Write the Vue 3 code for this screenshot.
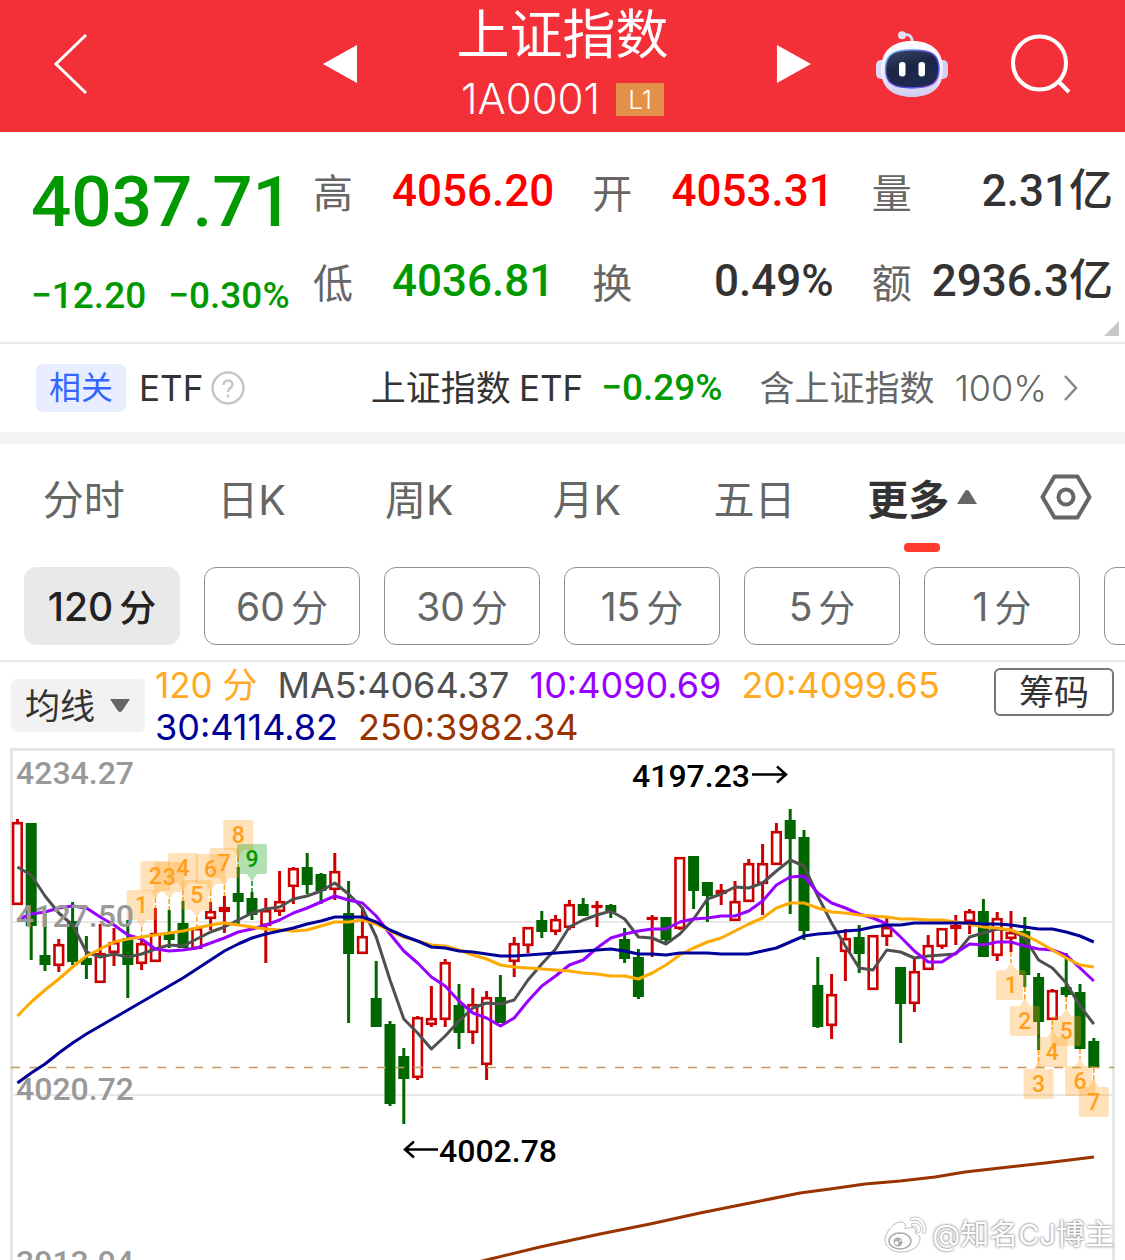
<template>
  <div class="page">
    <header class="topbar">
      <button class="icon-btn back" aria-label="返回">
        <svg width="36" height="62" viewBox="0 0 36 62"><path d="M33 2 L3 31 L33 60" fill="none" stroke="#fff" stroke-width="3" /></svg>
      </button>
      <div class="switcher">
        <button class="icon-btn arrow" aria-label="上一个">
          <svg width="34" height="38" viewBox="0 0 34 38"><path d="M34 0 V38 L0 19 Z" fill="#fff" /></svg>
        </button>
        <div class="title">
          <h1>上证指数</h1>
          <div class="code">1A0001 <span class="level">L1</span></div>
        </div>
        <button class="icon-btn arrow" aria-label="下一个">
          <svg width="34" height="38" viewBox="0 0 34 38"><path d="M0 0 V38 L34 19 Z" fill="#fff" /></svg>
        </button>
      </div>
      <div class="actions">
        <button class="icon-btn" aria-label="智能助手">
          <svg width="72" height="66" viewBox="0 0 72 66">
            <defs>
              <linearGradient id="shell" x1="0" y1="0" x2="0" y2="1">
                <stop offset="0" stop-color="#ffffff" />
                <stop offset="0.6" stop-color="#eceafa" />
                <stop offset="1" stop-color="#cfcbf0" />
              </linearGradient>
              <linearGradient id="rim" x1="0" y1="0" x2="1" y2="1">
                <stop offset="0" stop-color="#59d8ee" />
                <stop offset="0.45" stop-color="#6c3fe8" />
                <stop offset="0.7" stop-color="#4a59f0" />
                <stop offset="1" stop-color="#b44cf5" />
              </linearGradient>
              <linearGradient id="visor" x1="0" y1="0" x2="0.4" y2="1">
                <stop offset="0" stop-color="#404a6c" />
                <stop offset="0.5" stop-color="#1b2545" />
                <stop offset="1" stop-color="#1e2a50" />
              </linearGradient>
            </defs>
            <path d="M26 4 C33 2 36 5 36.500 12" fill="none" stroke="#dcdaf3" stroke-width="3" />
            <circle cx="26" cy="4.200" r="4" fill="#e4e2f7" />
            <rect x="0" y="29" width="12" height="19" rx="5" fill="#dedbf5" />
            <rect x="60" y="29" width="12" height="19" rx="5" fill="#d3d0f1" />
            <path d="M36 10 C56 10 67 20 67 39 C67 57 55 66 36 66 C17 66 5 57 5 39 C5 20 16 10 36 10 Z" fill="url(#shell)" />
            <path d="M36 19 C55 19 63 23 63 38 C63 52 56 57 36 57 C17 57 9.500 52 9.500 38 C9.500 23 18 19 36 19 Z" fill="url(#visor)" stroke="url(#rim)" stroke-width="1.500" />
            <rect x="23" y="31" width="6.500" height="14.500" rx="3" fill="#fff" />
            <rect x="42.500" y="31" width="6.500" height="14.500" rx="3" fill="#fff" />
          </svg>
        </button>
        <button class="icon-btn" aria-label="搜索">
          <svg width="62" height="62" viewBox="0 0 62 62" fill="none" stroke="#fff" stroke-width="4">
            <circle cx="29.500" cy="30" r="26.500" />
            <path d="M48 48 L59 59" />
          </svg>
        </button>
      </div>
    </header>

    <section class="quote">
      <div class="price">
        <div class="last">4037.71</div>
        <div class="change"><span>−12.20</span><span>−0.30%</span></div>
      </div>
      <dl class="stats">
        <div v-for="s in stats" :key="s.label" class="stat">
          <dt>{{ s.label }}</dt>
          <dd :class="s.tone">{{ s.value }}</dd>
        </div>
      </dl>
      <svg class="corner" width="15" height="15" viewBox="0 0 15 15"><path d="M15 0 V15 H0 Z" fill="#c8c8c8" /></svg>
    </section>

    <a class="related" href="#etf">
      <span class="tag">相关</span>
      <span class="etf">ETF</span>
      <svg class="help" width="34" height="34" viewBox="0 0 34 34" fill="none" stroke="#c6c6c6" stroke-width="2.500">
        <circle cx="17" cy="17" r="15.500" />
        <path d="M12.500 14 C12.500 8 21.500 8 21.500 13.500 C21.500 17 17 17 17 21" />
        <path d="M17 23.500 V26.500" />
      </svg>
      <span class="name">上证指数<span class="latin">ETF</span></span>
      <span class="pct">−0.29%</span>
      <span class="contain">含上证指数</span>
      <span class="weight">100%</span>
      <svg class="chevron" width="16" height="28" viewBox="0 0 16 28"><path d="M2 2 L13 14 L2 26" fill="none" stroke="#888" stroke-width="2.500" /></svg>
    </a>

    <nav class="tabs">
      <button v-for="t in tabs" :key="t" :class="['tab', { active: t === activeTab }]" @click="activeTab = t">
        {{ t }}
        <svg v-if="t === '更多'" width="20" height="14" viewBox="0 0 20 14"><path d="M8 1 Q10 -1 12 1 L20 14 H0 Z" fill="#666" /></svg>
      </button>
      <button class="tab" aria-label="设置">
        <svg width="52" height="46" viewBox="0 0 52 46" fill="none" stroke="#666" stroke-width="4">
          <path d="M14.500 2.500 H37.500 L49.500 23 L37.500 43.500 H14.500 L2.500 23 Z" stroke-linejoin="round" />
          <circle cx="26" cy="23" r="7.500" />
        </svg>
      </button>
    </nav>

    <div class="periods">
      <button v-for="p in periods" :key="p" :class="['period', { active: p === activePeriod }]" @click="activePeriod = p">
        <template v-if="p"><span>{{ p }}</span><span class="unit">分</span></template>
      </button>
    </div>

    <div class="indicator">
      <div class="picker">
        <select v-model="overlay" aria-label="主图指标">
          <option>均线</option>
        </select>
        <svg width="20" height="13" viewBox="0 0 20 13"><path d="M0 0 H20 L12 12 Q10 14 8 12 Z" fill="#666" /></svg>
      </div>
      <div class="legend">
        <span v-for="l in legend" :key="l.text" :class="l.cls">{{ l.text }}</span>
      </div>
      <button class="chips">筹码</button>
    </div>

    <div class="chart-wrap">
      <svg class="chart" viewBox="0 748 1125 512">
        <path class="frame" d="M11.500 1270 V749.500 H1113.500 V1270" />
        <path class="grid" d="M12 922 H1113 M12 1095 H1113" />

        <g v-for="(c, i) in candles" :key="'c' + i" :class="c[0] === 'r' ? 'up' : 'down'">
          <template v-if="c[0] === 'r'">
            <path :d="`M${x(i)} ${c[1]} V${c[2] + 1} M${x(i)} ${c[3] - 1} V${c[4]}`" />
            <rect :x="x(i) - 4.3" :y="c[2] + 1.2" width="8.600" :height="Math.max(c[3] - c[2] - 2.4, 0.6)" />
          </template>
          <template v-else>
            <path :d="`M${x(i)} ${c[1]} V${c[4]}`" />
            <rect :x="x(i) - 5.5" :y="c[2]" width="11" :height="c[3] - c[2]" />
          </template>
        </g>

        <path class="last-line" d="M11 1067.500 H1114" />

        <g v-for="m in marks" :key="'m' + m.i + m.n" :class="['mark', { done: m.n === 9 }]">
          <path class="gap" :d="stem(m)" />
          <path class="stem" :d="stem(m)" />
          <path class="tagbox" :d="tagPath(m)" />
          <text :x="x(m.i)" :y="m.y + 23">{{ m.n }}</text>
        </g>

        <polyline v-for="l in lines" :key="l.cls" :class="['ma', l.cls]" :points="points(l.ys)" />
        <polyline class="ma ma250" points="478,1262 540,1247 600,1234 650,1224 700,1213 750,1203 800,1193 830,1189 865,1184 900,1181 935,1177 965,1172 1000,1168 1045,1163 1094,1157" />

        <text class="axis" x="16" y="784">4234.27</text>
        <text class="axis" x="16" y="927">4127.50</text>
        <text class="axis" x="16" y="1100">4020.72</text>
        <text class="axis" x="16" y="1273">3913.94</text>

        <text class="peak" x="632" y="787">4197.23</text>
        <path class="peak-arrow" d="M752 774.500 H786 M777 766.500 L786 774.500 L777 782.500" />
        <text class="peak" x="439" y="1162">4002.78</text>
        <path class="peak-arrow" d="M438 1149.500 H405 M414 1141.500 L405 1149.500 L414 1157.500" />
      </svg>

      <div class="watermark">
        <svg width="44" height="38" viewBox="0 0 44 38">
          <path d="M17 6 C12 5 1 15 1 24 C1 31 8 36 17 36 C28 36 36 30 36 23 C36 19 33 18 31 17 C33 12 29 10 21 13 C22 9 21 6 17 6 Z" fill="#fff" stroke="#bbb" />
          <ellipse cx="16" cy="25" rx="11" ry="8" fill="#fff" stroke="#aaa" stroke-width="1.500" />
          <circle cx="14" cy="26" r="4.500" fill="#aaa" />
          <circle cx="12.500" cy="27" r="2" fill="#fff" />
          <circle cx="16.500" cy="24.500" r="1" fill="#fff" />
          <path d="M28 3 C36 1 42 8 40 16 M29 9 C33 8 36 11 34.500 15" fill="none" stroke="#bbb" stroke-width="4" stroke-linecap="round" />
          <path d="M28 3 C36 1 42 8 40 16 M29 9 C33 8 36 11 34.500 15" fill="none" stroke="#fff" stroke-width="2.500" stroke-linecap="round" />
        </svg>
        <span>@知名CJ博主</span>
      </div>
    </div>
  </div>
</template>

<script setup>
import { ref } from 'vue'

const stats = [
  { label: '高', value: '4056.20', tone: 'rise' },
  { label: '开', value: '4053.31', tone: 'rise' },
  { label: '量', value: '2.31亿', tone: '' },
  { label: '低', value: '4036.81', tone: 'fall' },
  { label: '换', value: '0.49%', tone: '' },
  { label: '额', value: '2936.3亿', tone: '' },
]

const tabs = ['分时', '日K', '周K', '月K', '五日', '更多']
const activeTab = ref('更多')

// last entry is the empty one that runs off the right edge
const periods = ['120', '60', '30', '15', '5', '1', '']
const activePeriod = ref('120')

const overlay = ref('均线')

const legend = [
  { text: '120 分', cls: 'c-period' },
  { text: 'MA5:4064.37', cls: 'c-ma5' },
  { text: '10:4090.69', cls: 'c-ma10' },
  { text: '20:4099.65', cls: 'c-ma20' },
  { text: '30:4114.82', cls: 'c-ma30' },
  { text: '250:3982.34', cls: 'c-ma250' },
]

// [colour, high, body top, body bottom, low]
const candles = [
  ['r', 819, 822, 905, 905], ['g', 823, 823, 926, 960], ['g', 912, 955, 965, 971], ['r', 939, 944, 966, 972],
  ['g', 902, 921, 962, 965], ['g', 936, 958, 965, 979], ['r', 924, 953, 983, 983], ['r', 928, 942, 953, 966],
  ['g', 920, 938, 965, 998], ['r', 938, 943, 964, 970], ['r', 908, 933, 962, 962], ['g', 910, 932, 940, 948],
  ['g', 901, 923, 948, 948], ['r', 928, 928, 949, 949], ['r', 902, 911, 919, 930], ['r', 896, 907, 912, 933],
  ['g', 867, 893, 902, 926], ['g', 892, 898, 915, 920], ['r', 898, 910, 926, 963], ['r', 871, 901, 912, 916],
  ['r', 867, 868, 887, 904], ['g', 853, 867, 885, 894], ['g', 873, 874, 891, 904], ['r', 853, 871, 890, 900],
  ['g', 881, 913, 954, 1023], ['r', 907, 936, 954, 954], ['g', 961, 998, 1027, 1027], ['g', 1021, 1024, 1104, 1106],
  ['g', 1048, 1056, 1079, 1124], ['r', 1016, 1017, 1078, 1080], ['r', 986, 1018, 1025, 1027], ['r', 959, 962, 1020, 1027],
  ['g', 984, 1005, 1033, 1049], ['r', 988, 1004, 1033, 1044], ['r', 991, 997, 1065, 1080], ['g', 975, 997, 1023, 1023],
  ['r', 937, 943, 962, 977], ['r', 927, 927, 946, 953], ['g', 911, 920, 932, 938], ['r', 915, 919, 932, 935],
  ['r', 900, 904, 928, 930], ['g', 898, 904, 916, 916], ['r', 901, 905, 908, 927], ['g', 904, 905, 912, 918],
  ['g', 928, 939, 959, 963], ['g', 949, 957, 997, 999], ['r', 915, 917, 920, 957], ['g', 917, 917, 940, 943],
  ['r', 857, 857, 929, 930], ['g', 856, 856, 891, 909], ['g', 882, 882, 896, 922], ['r', 884, 890, 894, 905],
  ['r', 881, 901, 921, 921], ['r', 859, 863, 902, 902], ['r', 844, 863, 884, 915], ['r', 823, 831, 865, 865],
  ['g', 809, 820, 839, 914], ['g', 830, 837, 931, 940], ['g', 957, 985, 1027, 1028], ['r', 974, 994, 1026, 1039],
  ['r', 929, 938, 952, 981], ['g', 925, 937, 954, 973], ['r', 935, 935, 990, 990], ['r', 918, 927, 937, 946],
  ['g', 967, 967, 1004, 1043], ['r', 957, 971, 1004, 1012], ['r', 935, 945, 970, 970], ['r', 928, 928, 947, 949],
  ['r', 915, 925, 929, 945], ['r', 909, 911, 922, 934], ['g', 899, 911, 957, 957], ['r', 912, 918, 956, 961],
  ['r', 911, 932, 939, 952], ['g', 917, 931, 975, 987], ['g', 973, 977, 1022, 1050], ['r', 989, 990, 1020, 1020],
  ['g', 953, 987, 995, 997], ['g', 984, 992, 1049, 1049], ['g', 1038, 1041, 1068, 1068],
]

const lines = [
  { cls: 'ma5', ys: [867, 875, 896, 913, 925, 952, 957, 954, 957, 954, 949, 945, 946, 939, 932, 927, 920, 913, 909, 907, 899, 896, 891, 883, 894, 908, 937, 980, 1019, 1033, 1049, 1036, 1021, 1008, 1003, 1004, 1000, 980, 964, 949, 927, 920, 915, 911, 919, 937, 938, 944, 934, 919, 899, 894, 887, 888, 883, 871, 860, 866, 896, 923, 946, 968, 970, 950, 952, 958, 956, 955, 954, 937, 933, 929, 930, 938, 960, 968, 983, 1006, 1024] },
  { cls: 'ma10', ys: [920, 914, 912, 908, 906, 908, 917, 925, 935, 939, 949, 951, 950, 948, 943, 938, 932, 929, 925, 920, 913, 908, 902, 896, 900, 903, 916, 934, 951, 963, 977, 986, 1001, 1013, 1018, 1026, 1018, 1001, 986, 976, 965, 960, 948, 938, 934, 931, 929, 929, 922, 919, 918, 916, 916, 911, 901, 885, 877, 876, 893, 903, 908, 914, 918, 924, 937, 951, 962, 962, 953, 944, 945, 942, 942, 946, 949, 950, 955, 968, 981] },
  { cls: 'ma20', ys: [1016, 1002, 990, 979, 967, 956, 949, 942, 939, 937, 935, 933, 931, 928, 925, 923, 925, 927, 929, 930, 931, 930, 926, 922, 922, 920, 924, 931, 937, 941, 945, 946, 950, 955, 959, 965, 967, 968, 969, 970, 971, 973, 974, 976, 976, 979, 973, 965, 955, 948, 942, 938, 931, 924, 918, 908, 903, 903, 908, 912, 913, 915, 916, 917, 919, 919, 920, 920, 922, 924, 927, 928, 930, 935, 942, 950, 958, 965, 967] },
  { cls: 'ma30', ys: [1083, 1073, 1064, 1053, 1043, 1034, 1026, 1018, 1010, 1002, 994, 986, 978, 969, 960, 951, 944, 938, 934, 931, 928, 924, 921, 917, 917, 917, 922, 930, 936, 941, 947, 948, 951, 952, 954, 956, 956, 955, 954, 953, 952, 951, 950, 949, 951, 954, 954, 955, 953, 953, 953, 954, 954, 954, 951, 948, 942, 936, 934, 933, 931, 930, 927, 925, 925, 923, 923, 923, 923, 923, 924, 924, 925, 927, 929, 929, 932, 936, 942] },
]

// nine-turn counts: n = number, i = candle, y = top of the box
const marks = [
  { n: 1, i: 9, y: 890 }, { n: 2, i: 10, y: 861 }, { n: 3, i: 11, y: 862 }, { n: 4, i: 12, y: 853 },
  { n: 5, i: 13, y: 880 }, { n: 6, i: 14, y: 854 }, { n: 7, i: 15, y: 848 }, { n: 8, i: 16, y: 820 },
  { n: 9, i: 17, y: 844 },
  { n: 1, i: 72, y: 970, below: true }, { n: 2, i: 73, y: 1006, below: true }, { n: 3, i: 74, y: 1069, below: true },
  { n: 4, i: 75, y: 1037, below: true }, { n: 5, i: 76, y: 1016, below: true }, { n: 6, i: 77, y: 1066, below: true },
  { n: 7, i: 78, y: 1087, below: true },
]

const x = (i) => Math.round((17.4 + i * 13.8) * 10) / 10
const points = (ys) => ys.map((y, i) => `${x(i)},${y}`).join(' ')

const stem = (m) => {
  const c = candles[m.i]
  return m.below ? `M${x(m.i)} ${c[4]} V${m.y - 7}` : `M${x(m.i)} ${m.y + 37} V${c[1]}`
}

const tagPath = (m) => {
  const foot = m.below ? 'h-26' : 'h-8 l-4.500 7 h-1 l-4.500 -7 h-8'
  const head = m.below ? 'h8 l4.500 -7 h1 l4.500 7 h8' : 'h26'
  return `M${x(m.i) - 13} ${m.y} ${head} q2 0 2 2 v26 q0 2 -2 2 ${foot} q-2 0 -2 -2 v-26 q0 -2 2 -2 Z`
}
</script>

<style>
body {
  background: #fff;
}
</style>

<style scoped>
.page {
  font-family: Inter, "Noto Sans CJK SC", sans-serif;
  color: #333;
  background: #fff;
  overflow: hidden;
}

button {
  font-family: inherit;
  border: none;
  background: none;
  padding: 0;
  margin: 0;
  color: inherit;
  cursor: pointer;
}

svg { display: block; }

/* header */
.topbar {
  display: grid;
  grid-template-columns: 1fr 496px 1fr;
  align-items: center;
  box-sizing: border-box;
  height: 132px;
  padding-bottom: 4px;
  background: #f33038;
  color: #fff;
}

.back { justify-self: start; margin-left: 53px; }

.switcher {
  display: flex;
  align-items: center;
}

.arrow {
  display: flex;
  justify-content: flex-end;
  width: 42px;
}

.title {
  flex: 1;
  text-align: center;
}

.title h1 {
  margin: 0;
  font-size: 53px;
  line-height: 70px;
  font-weight: 400;
}

.code {
  display: flex;
  justify-content: center;
  align-items: center;
  gap: 16px;
  font-size: 42px;
  line-height: 58px;
  font-weight: 300;
}

.level {
  background: #e39148;
  font-size: 26px;
  line-height: 33px;
  width: 48px;
}

.actions {
  display: flex;
  align-items: center;
  justify-content: flex-end;
  gap: 62px;
  padding-right: 53px;
}

/* quote */
.quote {
  position: relative;
  display: flex;
  height: 210px;
  border-bottom: 2px solid #e9e9e9;
  font-family: Roboto, "Noto Sans CJK SC", sans-serif;
  font-weight: 500;
}

.price {
  width: 282px;
  padding: 20px 0 0 31px;
  color: #009900;
}

.last {
  font-size: 71px;
  line-height: 100px;
}

.change {
  display: flex;
  gap: 22px;
  font-size: 37px;
  line-height: 88px;
}

.stats {
  flex: 1;
  display: grid;
  grid-template-columns: repeat(3, 1fr);
  grid-auto-rows: 90px;
  column-gap: 38px;
  margin: 0;
  padding: 14px 12px 0 0;
}

.stat {
  display: flex;
  align-items: center;
  justify-content: space-between;
}

.stat dt {
  font-size: 40px;
  font-weight: 400;
  color: #666;
}

.stat dd {
  margin: 0;
  font-size: 44px;
  line-height: 64px;
  white-space: nowrap;
}

.rise { color: #ff0000; }
.fall { color: #009900; }

.corner {
  position: absolute;
  right: 6px;
  bottom: 6px;
}

/* related ETF */
.related {
  display: flex;
  align-items: center;
  height: 88px;
  padding: 0 46px 0 36px;
  border-bottom: 12px solid #f4f4f4;
  color: #333;
  font-size: 35px;
  line-height: 40px;
  text-decoration: none;
}

.tag {
  padding: 0 13px;
  border-radius: 6px;
  background: #e8eeff;
  color: #3366ff;
  font-size: 32px;
  line-height: 48px;
}

.etf { margin-left: 13px; }
.help { margin: 0 auto 0 8px; }
.latin { margin-left: 8px; }

.pct {
  margin-left: 18px;
  font-family: Roboto, "Noto Sans CJK SC", sans-serif;
  font-size: 37px;
  font-weight: 500;
  color: #009900;
}

.contain { margin-left: 37px; color: #666; }
.weight { margin-left: 20px; color: #666; font-size: 36px; font-weight: 300; }
.chevron { margin-left: 16px; }

/* tabs */
.tabs {
  display: grid;
  grid-template-columns: repeat(6, 1fr) 119px;
  height: 110px;
}

.tab {
  position: relative;
  display: flex;
  align-items: center;
  justify-content: center;
  gap: 8px;
  padding-bottom: 4px;
  font-size: 41px;
  color: #666;
}

.tab.active {
  font-weight: 700;
  color: #333;
}

.tab.active::after {
  content: "";
  position: absolute;
  bottom: 2px;
  left: 50%;
  width: 36px;
  height: 9px;
  margin-left: -18px;
  border-radius: 4px;
  background: #ff3b30;
}

.periods {
  display: flex;
  gap: 24px;
  padding: 13px 0 15px 24px;
  overflow: hidden;
  border-bottom: 2px solid #e9e9e9;
}

.period {
  flex: none;
  display: flex;
  align-items: center;
  justify-content: center;
  gap: 6px;
  width: 156px;
  height: 78px;
  border: 1px solid #8f8f8f;
  border-radius: 12px;
  font-size: 39px;
  color: #666;
}

.period.active {
  border-color: #e9e9e9;
  background: #e9e9e9;
  color: #222;
  font-weight: 500;
}

.unit { font-size: 37px; }

/* indicator row */
.indicator {
  display: flex;
  align-items: flex-start;
  height: 86px;
  padding: 0 11px;
}

.picker {
  position: relative;
  margin-top: 17px;
}

.picker select {
  appearance: none;
  width: 134px;
  height: 53px;
  padding: 0 0 0 14px;
  border: none;
  border-radius: 6px;
  background: #f2f2f2;
  color: #333;
  font-family: inherit;
  font-size: 35px;
}

.picker svg {
  position: absolute;
  right: 15px;
  top: 20px;
  pointer-events: none;
}

.legend {
  flex: 1;
  display: flex;
  flex-wrap: wrap;
  column-gap: 20px;
  margin-left: 10px;
  padding-top: 2px;
  font-size: 36px;
  line-height: 42px;
}

.c-period, .c-ma20 { color: #ffaa22; }
.c-period { font-size: 35px; }
.c-ma5 { color: #505050; }
.c-ma10 { color: #9900ff; }
.c-ma30 { color: #000099; }
.c-ma250 { color: #993300; }

.chips {
  width: 120px;
  height: 48px;
  margin-top: 6px;
  border: 2px solid #777;
  border-radius: 6px;
  font-size: 35px;
  line-height: 44px;
}

/* chart */
.chart-wrap { position: relative; }

.chart {
  width: 100%;
  height: auto;
  font-family: Roboto, "Noto Sans CJK SC", sans-serif;
  font-weight: 500;
}

.frame { fill: none; stroke: #e6e6e6; stroke-width: 3; }
.grid { stroke: #e8e8e8; stroke-width: 2; }
.up path { stroke: #cc0000; stroke-width: 3; }
.up rect { fill: #fff; stroke: #cc0000; stroke-width: 2.6; }
.down path { stroke: #006600; stroke-width: 3; }
.down rect { fill: #006600; }
.last-line { stroke: #c49a5e; stroke-width: 1.5; stroke-dasharray: 9 9.3; }

.ma { fill: none; stroke-width: 3; stroke-linejoin: round; }
.ma5 { stroke: #505050; }
.ma10 { stroke: #9900ff; }
.ma20 { stroke: #ffaa00; }
.ma30 { stroke: #000099; }
.ma250 { stroke: #993300; }

.mark .gap { stroke: #fff; stroke-width: 4; }
.mark .stem { stroke: #ff9f1a; stroke-width: 1.5; stroke-dasharray: 5 2; }
.mark .tagbox { fill: #ff9f1a; fill-opacity: 0.3; }
.mark text { fill: #ff9f1a; font-size: 23px; text-anchor: middle; }
.mark.done .stem { stroke: #009900; }
.mark.done .tagbox { fill: #009900; }
.mark.done text { fill: #009900; }

.axis { fill: #999; font-size: 32px; }
.peak { fill: #000; font-size: 32px; }
.peak-arrow { fill: none; stroke: #000; stroke-width: 2.5; }

.watermark {
  position: absolute;
  right: 11px;
  bottom: 6px;
  display: flex;
  align-items: center;
  gap: 4px;
  color: #fff;
  font-size: 29px;
  line-height: 38px;
  text-shadow: 0 0 3px #888, 0 0 2px #999;
}
</style>
